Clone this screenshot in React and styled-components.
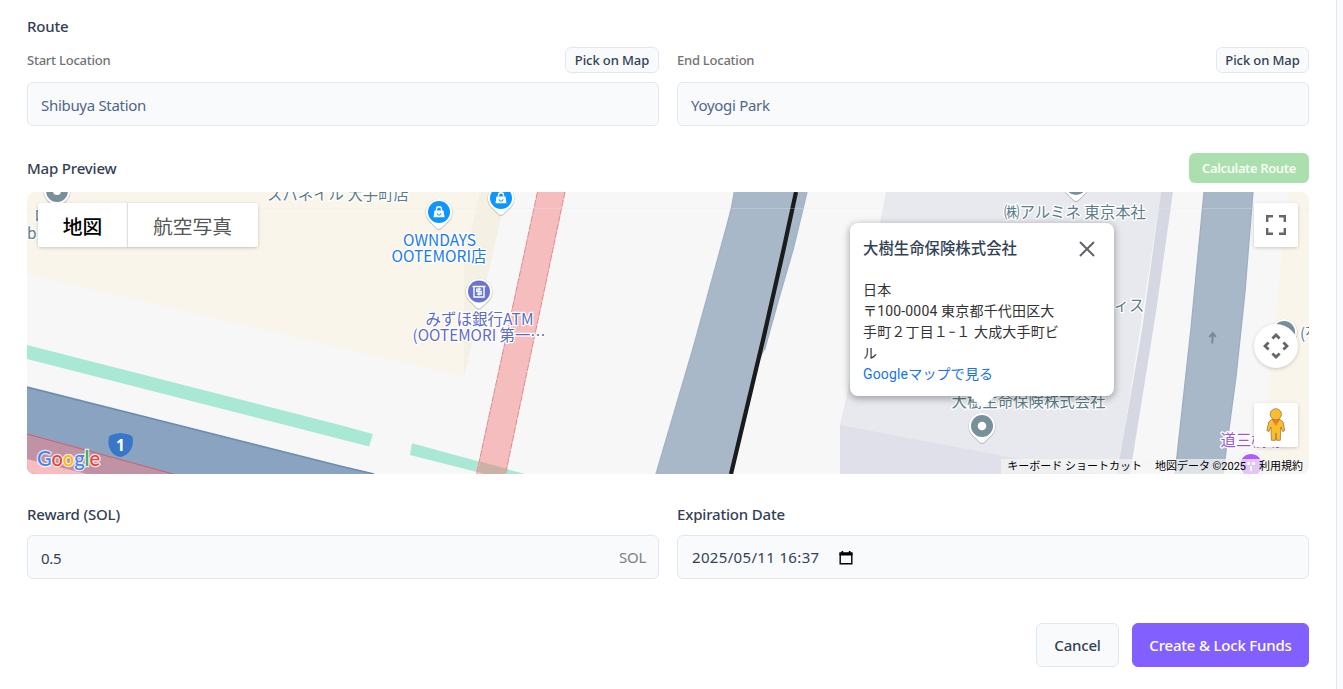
import React from "react";
import styled, { createGlobalStyle } from "styled-components";

const GlobalStyle = createGlobalStyle`
  * { box-sizing: border-box; }
  html, body { margin: 0; padding: 0; }
  body {
    height: 689px;
    overflow: hidden;
    background: #f8fafc;
    font-family: "Noto Sans", "Noto Sans CJK JP", sans-serif;
    color: #334155;
  }
  button, input { font-family: inherit; }
`;

const Card = styled.main`
  width: 1337px;
  height: 689px;
  padding: 15px 27px 0;
  background: #fff;
  border-right: 1px solid #e2e8f0;
`;

const Heading = styled.h3`
  margin: 0;
  height: 22px;
  font-size: 15px;
  line-height: 22px;
  font-weight: 500;
  letter-spacing: ${(p) => p.$track || "-0.18px"};
  color: #334155;
`;

const Columns = styled.div`
  display: grid;
  grid-template-columns: 632px 632px;
  column-gap: 18px;
  margin-top: ${(p) => p.$top || 0}px;
`;

const LabelRow = styled.div`
  display: flex;
  align-items: center;
  justify-content: space-between;
  height: 26px;
  margin-bottom: 9px;
`;

const SmallLabel = styled.label`
  font-size: 13px;
  font-weight: 500;
  letter-spacing: -0.24px;
  color: #737373;
`;

const PickButton = styled.button`
  height: 26px;
  width: ${(p) => p.$width}px;
  padding: 0;
  border: 1px solid #e2e8f0;
  border-radius: 6px;
  background: #f8fafc;
  color: #334155;
  font-size: 13px;
  line-height: 24px;
  font-weight: 500;
  letter-spacing: -0.1px;
`;

const Field = styled.div`
  display: flex;
  align-items: center;
  height: 44px;
  padding: ${(p) => (p.$raised ? 0 : 2)}px 12px 0 ${(p) => (p.$raised ? 14 : 13)}px;
  border: 1px solid #e2e8f0;
  border-radius: 6px;
  background: #f8fafc;
  font-size: 15px;
  letter-spacing: ${(p) => p.$track || "-0.3px"};
  color: ${(p) => p.$color || "#52658a"};
`;

const Unit = styled.span`
  margin: -2px 0 0 auto;
  color: #808080;
`;

const MapHeader = styled.div`
  display: flex;
  align-items: center;
  justify-content: space-between;
  height: 30px;
  margin: 27px 0 9px;
`;

const CalculateButton = styled.button`
  width: 120px;
  height: 30px;
  padding: 0;
  border: 0;
  border-radius: 6px;
  background: #abdfad;
  color: #f6fcf6;
  font-size: 13px;
  font-weight: 600;
  letter-spacing: -0.38px;
`;

const MapFrame = styled.section`
  position: relative;
  width: 1282px;
  height: 282px;
  overflow: hidden;
  border-radius: 8px;
  background: #f7f7f7;
`;

const MapCanvas = styled.svg`
  display: block;
  font-family: "Noto Sans CJK JP", sans-serif;
`;

const MapTypes = styled.div`
  position: absolute;
  left: 11px;
  top: 11px;
  display: flex;
  height: 44px;
  border-radius: 2px;
  background: #fff;
  box-shadow: 0 1px 4px -1px rgba(0, 0, 0, 0.3);
`;

const MapType = styled.button`
  width: ${(p) => p.$width}px;
  height: 44px;
  padding: 1px 1px 0 0;
  border: 0;
  background: transparent;
  font-family: Roboto, "Noto Sans CJK JP", sans-serif;
  font-size: 19.8px;
  font-weight: ${(p) => (p.$active ? 500 : 400)};
  color: ${(p) => (p.$active ? "#000" : "#565656")};
  & + & { box-shadow: -1px 0 1px rgba(0, 0, 0, 0.12); }
`;

const MapControl = styled.button`
  position: absolute;
  right: 11px;
  top: ${(p) => p.$top}px;
  display: grid;
  place-items: center;
  width: 44px;
  height: 44px;
  padding: 0;
  border: 0;
  border-radius: ${(p) => (p.$round ? "50%" : "2px")};
  background: #fff;
  box-shadow: 0 1px 4px -1px rgba(0, 0, 0, 0.3);
`;

const InfoWindow = styled.article`
  position: absolute;
  left: 823px;
  top: 31px;
  width: 264px;
  height: 173px;
  padding: 15px 13px;
  border-radius: 8px;
  background: #fff;
  box-shadow: 0 2px 7px 1px rgba(0, 0, 0, 0.3);
  font-family: Roboto, "Noto Sans CJK JP", sans-serif;
  font-size: 14px;
  line-height: 21px;
  letter-spacing: 0.17px;
  color: #333;
`;

const InfoTail = styled.div`
  position: absolute;
  left: 943px;
  top: 204px;
  width: 25px;
  height: 12px;
  background: #fff;
  clip-path: polygon(0 0, 100% 0, 50% 100%);
`;

const InfoHead = styled.header`
  display: flex;
  align-items: center;
  justify-content: space-between;
  height: 22px;
  margin-bottom: 20px;
  padding-right: 5px;
`;

const InfoTitle = styled.h4`
  margin: 0;
  font-size: 15.4px;
  font-weight: 500;
  letter-spacing: 0;
  color: #334155;
`;

const InfoLine = styled.div`
  white-space: nowrap;
  height: 21px;
`;

const InfoLink = styled.a`
  color: #1a73e8;
`;

const Legal = styled.footer`
  position: absolute;
  right: 0;
  bottom: 0;
  display: flex;
  height: 15px;
  gap: 13px;
  padding: 0 6px;
  background: rgba(245, 245, 245, 0.7);
  font-family: Roboto, "Noto Sans CJK JP", sans-serif;
  font-size: 11px;
  line-height: 15px;
  color: #000;
  white-space: nowrap;
`;

const Actions = styled.div`
  display: flex;
  justify-content: flex-end;
  gap: 13px;
  margin-top: 44px;
`;

const ActionButton = styled.button`
  width: ${(p) => p.$width}px;
  height: 44px;
  padding: 0;
  border: 1px solid ${(p) => (p.$primary ? "#8260ff" : "#e2e8f0")};
  border-radius: 6px;
  background: ${(p) => (p.$primary ? "#8260ff" : "#f8fafc")};
  color: ${(p) => (p.$primary ? "#fff" : "#334155")};
  font-size: 15px;
  font-weight: 500;
  letter-spacing: -0.2px;
`;

const CalendarIcon = styled.svg`
  margin: 1px 0 0 20px;
`;

const Pin = ({ x, y, color, children }) => (
  <g transform={`translate(${x} ${y})`}>
    <path d="M0 17.5 C-2 17.5-3.5 15-9.4 9.8 A13.6 13.6 0 1 1 9.4 9.8 C3.5 15 2 17.5 0 17.5Z" fill="#8b8b8b" opacity=".45" transform="translate(0 .6)" />
    <path d="M0 17 C-2 17-3.5 14.5-9.3 9.3 A13.1 13.1 0 1 1 9.3 9.3 C3.5 14.5 2 17 0 17Z" fill="#fff" />
    <circle r="11" fill={color} />
    {children}
  </g>
);

const Bag = () => (
  <g>
    <path d="M-4.5-1.5h9l1 6.8h-11z" fill="#fff" />
    <path d="M-2.5-1.5v-1.2a2.5 2.5 0 0 1 5 0v1.2" fill="none" stroke="#fff" strokeWidth="1.4" />
    <path d="M-2 1.2a2 2 0 0 0 4 0" fill="none" stroke="#0d96fb" strokeWidth="1" />
  </g>
);

const Poi = ({ x, y, color = "#5c7d8a", anchor = "middle", width, children }) => (
  <text
    x={x}
    y={y}
    fontSize="15.4"
    textAnchor={anchor}
    textLength={width}
    lengthAdjust="spacingAndGlyphs"
    fill={color}
    stroke="#fff"
    strokeWidth="2.6"
    strokeLinejoin="round"
    paintOrder="stroke"
  >
    {children}
  </text>
);

const MapDrawing = () => (
  <MapCanvas width="1282" height="282" viewBox="27 192 1282 282">
    <path d="M27 192H507L464 377L27 274Z" fill="#f9f5ea" />
    <path d="M480 192H507L464 377V262Z" fill="#f5f0e4" />
    <path d="M27 345L340 425L373 434L369 446.5L340 439L27 359Z" fill="#a8e8d4" />
    <path d="M412 443.3L525 474H485L410 455Z" fill="#a8e8d4" />
    <path d="M27 387L340 466L374 474H27Z" fill="#8aa3c0" />
    <path d="M27 387L340 466L374 474" fill="none" stroke="#6b8db4" strokeWidth="1.7" />
    <path d="M27 434L173 474H27Z" fill="#bf93a4" />
    <path d="M27 434L173 474" stroke="#d6505c" strokeWidth=".8" />
    <path d="M27 459L87 474H27Z" fill="#f6bcbe" />
    <path d="M537.5 192H565L505.5 474H476.5Z" fill="#f6bdbe" />
    <path d="M537.5 192L476.5 474M565 192L505.5 474" stroke="#df8a8c" strokeWidth="1" strokeDasharray="7 1" />
    <path d="M480 461.5L508 469L506 474H485L478 472Z" fill="#cab2a7" />
    <path d="M734.3 192Q732 208 727 225L694 345L656 474H731L759 362L764.5 350L779 298L793 250L807 192Z" fill="#a9b8c9" />
    <path d="M734.3 192Q732 208 727 225L694 345L656 474M764.5 350L779 298L793 250L807 192" fill="none" stroke="#9fb2c7" strokeWidth="1.3" />
    <path d="M796 192L783 252L763.5 338L731 474" fill="none" stroke="#1b1b1b" strokeWidth="4.2" />
    <path d="M886 192H1161L1118 474H840V425L849 385Z" fill="#e8e9ee" />
    <path d="M840 425L1098 474H840Z" fill="#dfe0e9" />
    <path d="M1161 192H1173L1156 312L1130 474H1117L1142 330Z" fill="#d5d8e2" />
    <path d="M1204 192H1253L1245 292L1236 377L1223 474H1175L1191 328Z" fill="#a9b8c9" />
    <path d="M1204 192L1191 328L1175 474M1253 192L1245 292L1236 377L1223 474" fill="none" stroke="#9aaec4" strokeWidth="1.2" />
    <path d="M1289 192H1309V474H1261L1267 398L1280 272Z" fill="#f9f5ea" />
    <path d="M27 208.5H1309" stroke="#fff" strokeOpacity=".25" />
    <path d="M27 208.5H1309" stroke="#000" strokeOpacity=".025" />
    <path d="M1212.3 343.5L1212.7 334M1209.3 337L1212.8 333L1215.8 337" fill="none" stroke="#718c9d" strokeWidth="2" />

    <Pin x={57} y={191} color="#78909c"><circle r="4" fill="#fff" /></Pin>
    <Poi x={267} y={200} anchor="start" width={142}>スパネイル 大手町店</Poi>
    <Poi x={34} y={221} anchor="start">ロ</Poi>
    <Poi x={27} y={239} anchor="start">b</Poi>
    <Pin x={439} y={212} color="#0d96fb"><Bag /></Pin>
    <Pin x={501} y={198} color="#0d96fb"><Bag /></Pin>
    <Poi x={439.5} y={246} color="#1a7ae6" width={73}>OWNDAYS</Poi>
    <Poi x={439} y={261.5} color="#1a7ae6" width={95}>OOTEMORI店</Poi>
    <Pin x={479} y={291.5} color="#6874cf">
      <path d="M-6.5-5h13M-5-5V5.5H5V-5" fill="none" stroke="#fff" strokeWidth="1.4" />
      <path d="M2.2-2.4H-2.2V0H2.2V2.6H-2.2M0-4V4" fill="none" stroke="#fff" strokeWidth="1.4" />
    </Pin>
    <Poi x={479.5} y={325} color="#5e6bc4" width={108}>みずほ銀行ATM</Poi>
    <Poi x={479} y={340.5} color="#5e6bc4" width={133}>(OOTEMORI 第一⋯</Poi>

    <Pin x={1076} y={184} color="#78909c" />
    <Poi x={1075} y={217.5} width={142}>㈱アルミネ 東京本社</Poi>
    <Poi x={1144.5} y={311} anchor="end">オフィス</Poi>
    <Poi x={1028.5} y={407} width={154}>大樹生命保険株式会社</Poi>
    <Pin x={982} y={426} color="#78909c"><circle r="4.3" fill="#fff" /></Pin>
    <Pin x={1284} y={332} color="#78909c" />
    <Poi x={1300} y={338.5} anchor="start">(有)</Poi>
    <Poi x={1220.5} y={446} color="#9958dc" anchor="start">道三橋跡</Poi>
    <Pin x={1251} y={465} color="#b05cfa">
      <path d="M-4-3h3v3h-3zM1-3h3v3h-3zM-1 1h2v5h-2z" fill="#fff" />
    </Pin>

    <path d="M109 437Q110 434 120.5 433Q131 434 132.5 437Q134 445 130 451Q126 456 120.5 457Q114 456 111 451Q107 445 109 437Z" fill="#3877c7" />
    <text x="120.5" y="450.5" fontSize="15.5" fontWeight="700" textAnchor="middle" fill="#fff" style={{ fontFamily: "Noto Sans" }}>1</text>
    <text x="37" y="465.5" fontSize="21" fontWeight="500" textLength="63" lengthAdjust="spacingAndGlyphs" stroke="#fff" strokeOpacity=".8" strokeWidth="2.5" paintOrder="stroke" style={{ fontFamily: "Lato" }}>
      <tspan fill="#4285f4">G</tspan><tspan fill="#ea4335">o</tspan><tspan fill="#fbbc04">o</tspan><tspan fill="#4285f4">g</tspan><tspan fill="#34a853">l</tspan><tspan fill="#ea4335">e</tspan>
    </text>
  </MapCanvas>
);

const Controls = () => (
  <>
    <MapControl $top={11} aria-label="Fullscreen">
      <svg width="20" height="20" fill="none" stroke="#666" strokeWidth="2.4">
        <path d="M1.2 7V1.2H7M13 1.2h5.8V7M18.8 13v5.8H13M7 18.8H1.2V13" />
      </svg>
    </MapControl>
    <MapControl $top={132} $round aria-label="Camera">
      <svg width="26" height="26" fill="none" stroke="#666" strokeWidth="2.8">
        <path d="M9.4 5.6L13 2L16.6 5.6M9.4 20.4L13 24L16.6 20.4M5.6 9.4L2 13L5.6 16.6M20.4 9.4L24 13L20.4 16.6" />
      </svg>
    </MapControl>
    <MapControl $top={211} aria-label="Pegman">
      <svg width="20" height="34" viewBox="0 0 20 34" stroke="#967b43" strokeWidth=".8" fill="#fbbc2d">
        <path d="M5.5 11.5H14L17 14L18.8 22.5L16.7 23.6L14.8 19L14.3 32.3H10.6L10 25L9.4 32.3H5.4L4.9 19L3 23.6L.9 22.5L2.8 14Z" />
        <path d="M5.8 11.7H14L10 18Z" fill="#e4812a" stroke="none" />
        <circle cx="9.8" cy="6.3" r="5.6" />
      </svg>
    </MapControl>
  </>
);

export default function App() {
  return (
    <>
      <GlobalStyle />
      <Card>
        <Heading>Route</Heading>
        <Columns $top={10}>
          <div>
            <LabelRow><SmallLabel>Start Location</SmallLabel><PickButton $width={94}>Pick on Map</PickButton></LabelRow>
            <Field>Shibuya Station</Field>
          </div>
          <div>
            <LabelRow><SmallLabel>End Location</SmallLabel><PickButton $width={93}>Pick on Map</PickButton></LabelRow>
            <Field>Yoyogi Park</Field>
          </div>
        </Columns>
        <MapHeader>
          <Heading>Map Preview</Heading>
          <CalculateButton>Calculate Route</CalculateButton>
        </MapHeader>
        <MapFrame>
          <MapDrawing />
          <MapTypes>
            <MapType $width={90} $active>地図</MapType>
            <MapType $width={130}>航空写真</MapType>
          </MapTypes>
          <InfoWindow>
            <InfoHead>
              <InfoTitle>大樹生命保険株式会社</InfoTitle>
              <svg width="18" height="18" stroke="#5f6368" strokeWidth="2"><path d="M2 2L16 16M16 2L2 16" /></svg>
            </InfoHead>
            <InfoLine>日本</InfoLine>
            <InfoLine>〒100-0004 東京都千代田区大</InfoLine>
            <InfoLine>手町２丁目１−１ 大成大手町ビ</InfoLine>
            <InfoLine>ル</InfoLine>
            <InfoLink>Googleマップで見る</InfoLink>
          </InfoWindow>
          <InfoTail />
          <Controls />
          <Legal>
            <span>キーボード ショートカット</span><span>地図データ ©2025</span><span>利用規約</span>
          </Legal>
        </MapFrame>
        <Columns $top={29}>
          <div>
            <Heading>Reward (SOL)</Heading>
            <Columns $top={10}><Field $color="#334155">0.5<Unit>SOL</Unit></Field></Columns>
          </div>
          <div>
            <Heading>Expiration Date</Heading>
            <Columns $top={10}>
              <Field $color="#334155" $track="0.34px" $raised>
                2025/05/11 16:37
                <CalendarIcon width="14" height="14" viewBox="0 0 14 14">
                  <path d="M1.2 2.2H12.8V12.8H1.2Z" fill="none" stroke="#000" strokeWidth="1.4" />
                  <path d="M.5 1.5H13.5V4.6H.5ZM2.5 0H4.2V2H2.5ZM9.8 0H11.5V2H9.8Z" />
                </CalendarIcon>
              </Field>
            </Columns>
          </div>
        </Columns>
        <Actions>
          <ActionButton $width={83}>Cancel</ActionButton>
          <ActionButton $width={177} $primary>Create &amp; Lock Funds</ActionButton>
        </Actions>
      </Card>
    </>
  );
}
